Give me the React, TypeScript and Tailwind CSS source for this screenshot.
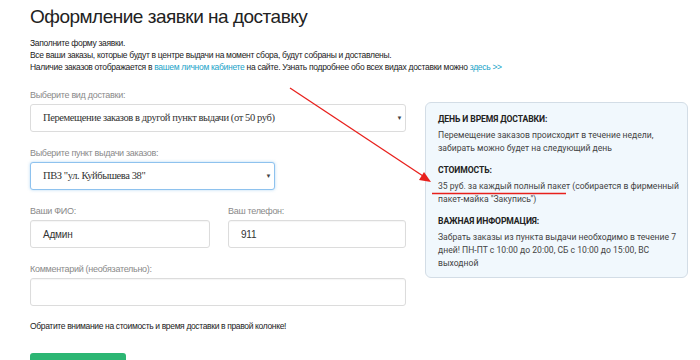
import React from 'react';

const labelCls = 'block text-[9px] leading-[12px] tracking-[-0.3px] text-[#8a8a8a] mb-[3px]';

const Field: React.FC<{ label: string; value?: string; className?: string }> = ({ label, value, className }) => (
  <div className={className}>
    <label className={labelCls}>{label}</label>
    <div className="h-[28px] w-full border border-[#dcdcdc] rounded-[3px] bg-white shadow-[inset_0_1px_1px_rgba(0,0,0,0.04)] px-[12px] flex items-center text-[10px] tracking-[-0.2px] text-[#333]">
      {value}
    </div>
  </div>
);

const SelectBox: React.FC<{ value: string; focus?: boolean; className?: string }> = ({ value, focus, className }) => (
  <div
    className={
      'h-[28px] rounded-[3px] bg-white flex items-center justify-between pl-[12px] pr-[3px] text-[10.5px] tracking-[-0.4px] text-[#333] ' +
      (focus ? 'border border-[#8ec2ee] shadow-[0_0_3px_rgba(102,175,233,0.5)] ' : 'border border-[#dcdcdc] ') +
      (className ?? '')
    }
    style={{ fontFamily: '"Liberation Serif", serif' }}
  >
    <span>{value}</span>
    <span className="text-[6px] text-[#444]">▼</span>
  </div>
);

export default function App() {
  return (
    <div className="relative w-[700px] h-[360px] overflow-hidden bg-white" style={{ fontFamily: '"Liberation Sans", Arial, sans-serif' }}>
      <div className="pl-[30px] pr-[12px] pt-[5px]">
        <h1 className="text-[19px] leading-[24px] tracking-[-0.5px] text-[#222] font-normal">Оформление заявки на доставку</h1>
        <div className="mt-[8px] text-[8.5px] leading-[12px] tracking-[-0.3px] text-[#222]">
          <p>Заполните форму заявки.</p>
          <p>Все ваши заказы, которые будут в центре выдачи на момент сбора, будут собраны и доставлены.</p>
          <p>
            Наличие заказов отображается в <span className="text-[#1aa3c8]">вашем личном кабинете</span> на сайте. Узнать подробнее обо всех видах доставки можно{' '}
            <span className="text-[#1aa3c8]">здесь &gt;&gt;</span>
          </p>
        </div>

        <div className="flex gap-[19px] mt-[16px]">
          <div className="w-[376px] shrink-0">
            <label className={labelCls}>Выберите вид доставки:</label>
            <SelectBox value="Перемещение заказов в другой пункт выдачи (от 50 руб)" />

            <label className={labelCls + ' mt-[15px]'}>Выберите пункт выдачи заказов:</label>
            <SelectBox value={'ПВЗ "ул. Куйбышева 38"'} focus className="w-[245px]" />

            <div className="flex gap-[18px] mt-[15px]">
              <Field label="Ваши ФИО:" value="Админ" className="w-[180px]" />
              <Field label="Ваш телефон:" value="911" className="flex-1" />
            </div>

            <Field label="Комментарий (необязательно):" className="mt-[15px]" />

            <p className="mt-[14px] text-[8.5px] leading-[12px] tracking-[-0.35px] text-[#222]">Обратите внимание на стоимость и время доставки в правой колонке!</p>

            <div className="mt-[21px] w-[96px] h-[30px] rounded-t-[3px] bg-[#2cb673]" />
          </div>

          <div className="w-[263px] shrink-0 mt-[13px] self-start rounded-[6px] border border-[#d3dde6] bg-[#f1f8fd] pl-[12px] pr-[6px] pt-[10px] pb-[7px] text-[8.6px] leading-[13px] text-[#444]" style={{ fontFamily: 'Roboto, sans-serif' }}>
            <div className="font-bold tracking-[-0.1px] text-[#222]">ДЕНЬ И ВРЕМЯ ДОСТАВКИ:</div>
            <p className="mt-[3px]">Перемещение заказов происходит в течение недели, забирать можно будет на следующий день</p>
            <div className="font-bold tracking-[-0.1px] text-[#222] mt-[9px]">СТОИМОСТЬ:</div>
            <p className="mt-[3px]">35 руб. за каждый полный пакет (собирается в фирменный пакет-майка "Закупись")</p>
            <div className="font-bold tracking-[-0.1px] text-[#222] mt-[9px]">ВАЖНАЯ ИНФОРМАЦИЯ:</div>
            <p className="mt-[3px]">Забрать заказы из пункта выдачи необходимо в течение 7 дней! ПН-ПТ с 10:00 до 20:00, СБ с 10:00 до 15:00, ВС выходной</p>
          </div>
        </div>
      </div>

      <svg className="absolute inset-0 pointer-events-none" width="700" height="360">
        <line x1="290" y1="88" x2="426" y2="178" stroke="#e8201c" strokeWidth="1.3" />
        <polygon points="431,182 419,180 424,172" fill="#e8201c" />
        <line x1="432" y1="193.5" x2="566" y2="193.5" stroke="#e8201c" strokeWidth="1.5" />
      </svg>
    </div>
  );
}
